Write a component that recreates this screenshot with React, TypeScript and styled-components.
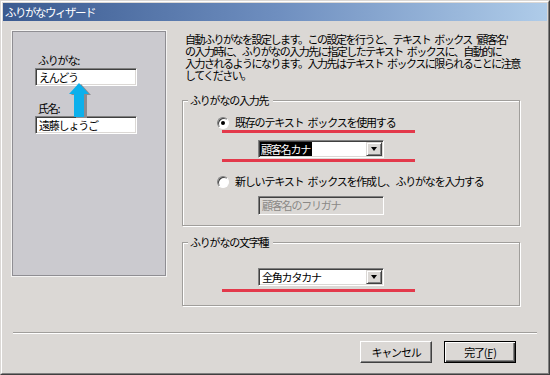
import React from "react";
import styled, { createGlobalStyle } from "styled-components";

const FACE = "#dbd8d5";
const SHADOW = "#808080";
const DARK = "#404040";
const SP = "\u2002";

const Global = createGlobalStyle`
  html, body { margin: 0; padding: 0; background: ${FACE}; }
  body {
    font-family: "Noto Sans CJK JP", "Noto Sans", sans-serif;
    font-size: 11px;
    letter-spacing: -1.2px;
    color: #000;
  }
`;

const Window = styled.div`
  width: 550px;
  height: 375px;
  box-sizing: border-box;
  display: flex;
  border: 1px solid;
  border-color: ${FACE} ${DARK} ${DARK} ${FACE};
  background: ${FACE};
`;

const Frame = styled.div`
  flex: 1;
  display: flex;
  flex-direction: column;
  border: 1px solid;
  border-color: #fff ${SHADOW} ${SHADOW} #fff;
  padding: 1px;
`;

const TitleBar = styled.div`
  height: 18px;
  line-height: 18px;
  padding-left: 2px;
  color: #fff;
  font-size: 11.5px;
  letter-spacing: -1.5px;
  background: linear-gradient(90deg, #3a5a90 0%, #6e8ebf 50%, #afcce9 100%);
  white-space: nowrap;
`;

const Body = styled.div`
  flex: 1;
  display: flex;
  flex-direction: column;
`;

const Main = styled.div`
  display: flex;
  align-items: flex-start;
  gap: 15px;
  margin: 9px 0 0 8px;
`;

const LeftPanel = styled.div`
  position: relative;
  width: 156px;
  height: 247px;
  box-sizing: border-box;
  background: #cbcacf;
  border: 1px solid #f4f3f2;
  box-shadow: inset 0 0 0 1px #8f8e93;
  padding: 23px 0 0 23px;
  display: flex;
  flex-direction: column;
  align-items: flex-start;
`;

const FieldLabel = styled.div<{ $mt: number }>`
  margin: ${(p) => p.$mt}px 0 0 3px;
  line-height: 13px;
  height: 13px;
  white-space: nowrap;
`;

const SunkenBox = styled.div<{ $w: number; $h: number; $disabled?: boolean }>`
  width: ${(p) => p.$w}px;
  height: ${(p) => p.$h}px;
  box-sizing: border-box;
  border: 1px solid;
  border-color: ${SHADOW} #fff #fff ${SHADOW};
  box-shadow: inset 1px 1px 0 ${DARK}, inset -1px -1px 0 ${FACE};
  background: ${(p) => (p.$disabled ? FACE : "#fff")};
  color: ${(p) => (p.$disabled ? "#8a8886" : "#000")};
  padding: 1px;
  display: flex;
  align-items: stretch;
  white-space: nowrap;
  line-height: 14px;
`;

const BoxText = styled.span`
  padding-left: 2px;
`;

const ArrowOverlay = styled.svg`
  position: absolute;
  left: 56px;
  top: 52px;
`;

const RightCol = styled.div`
  width: 339px;
  display: flex;
  flex-direction: column;
`;

const Description = styled.p`
  margin: 3px 0 0 3px;
  line-height: 12px;
  letter-spacing: -1.5px;
  white-space: nowrap;
`;

const Group = styled.fieldset<{ $mt: number }>`
  margin: ${(p) => p.$mt}px 0 0 0;
  padding: 0;
  width: 338px;
  box-sizing: border-box;
  border: 1px solid #a09e9b;
  box-shadow: 1px 1px 0 #fff, inset 1px 1px 0 #fff;
  min-inline-size: 0;
`;

const Legend = styled.legend`
  margin-left: 5px;
  padding: 0 5px 0 2px;
  line-height: 12px;
  background: ${FACE};
  white-space: nowrap;
`;

const GroupInner = styled.div<{ $pt: number; $pb: number }>`
  display: flex;
  flex-direction: column;
  align-items: flex-start;
  padding: ${(p) => p.$pt}px 0 ${(p) => p.$pb}px 34px;
`;

const RadioRow = styled.div<{ $mt: number }>`
  display: flex;
  align-items: center;
  gap: 6px;
  height: 13px;
  line-height: 13px;
  margin-top: ${(p) => p.$mt}px;
  white-space: nowrap;
`;

const RadioDot = styled.span<{ $checked?: boolean }>`
  position: relative;
  flex: none;
  width: 12px;
  height: 12px;
  box-sizing: border-box;
  border-radius: 50%;
  background: #fff;
  border: 1px solid;
  border-color: ${SHADOW} #fff #fff ${SHADOW};
  box-shadow: inset 1px 1px 0 ${DARK};
  &::after {
    content: "";
    display: ${(p) => (p.$checked ? "block" : "none")};
    position: absolute;
    left: 3px;
    top: 3px;
    width: 4px;
    height: 4px;
    border-radius: 50%;
    background: #000;
  }
`;

const Indented = styled.div<{ $ml: number; $mt: number }>`
  margin-left: ${(p) => p.$ml}px;
  margin-top: ${(p) => p.$mt}px;
`;

const Mark = styled.div<{ $mt: number }>`
  width: 193px;
  height: 3px;
  margin: ${(p) => p.$mt}px 0 0 5px;
  background: #e3394b;
  box-shadow: 0 0 0.5px #f07080;
`;

const ComboText = styled.div`
  flex: 1;
  display: flex;
  align-items: stretch;
  min-width: 0;
`;

const Selected = styled.span`
  background: #000;
  color: #fff;
  padding: 0 2px 0 1px;
`;

const DropButton = styled.div`
  width: 16px;
  box-sizing: border-box;
  background: ${FACE};
  border: 1px solid;
  border-color: ${FACE} ${DARK} ${DARK} ${FACE};
  box-shadow: inset 1px 1px 0 #fff, inset -1px -1px 0 ${SHADOW};
  display: flex;
  align-items: center;
  justify-content: center;
  &::after {
    content: "";
    width: 0;
    height: 0;
    border-left: 3.5px solid transparent;
    border-right: 3.5px solid transparent;
    border-top: 4px solid #000;
  }
`;

const Separator = styled.div`
  margin: 26px 10px 0 10px;
  border-top: 1px solid #a09e9b;
  border-bottom: 1px solid #fff;
`;

const ButtonRow = styled.div`
  display: flex;
  justify-content: flex-end;
  gap: 12px;
  margin-top: 7px;
  padding-right: 31px;
`;

const Button = styled.button<{ $default?: boolean }>`
  width: 72px;
  height: 22px;
  box-sizing: border-box;
  margin: 0;
  padding: 0;
  font: inherit;
  letter-spacing: inherit;
  color: #000;
  background: ${FACE};
  border: 1px solid;
  border-color: ${(p) => (p.$default ? "#000" : `#fff ${DARK} ${DARK} #fff`)};
  box-shadow: ${(p) =>
    p.$default
      ? `inset 1px 1px 0 #fff, inset -1px -1px 0 ${DARK}, inset -2px -2px 0 ${SHADOW}`
      : `inset -1px -1px 0 ${SHADOW}`};
  line-height: 18px;
`;

const Accel = styled.span`
  text-decoration: underline;
  text-underline-offset: 1px;
  margin: 0 1px;
`;

function UpArrow() {
  return (
    <ArrowOverlay width="24" height="35" viewBox="0 0 24 35">
      <polygon points="13,1 23,12 19,12 19,35 8,35 8,12 3,12" fill="#8c8b90" />
      <polygon points="11,0 21,11 16,11 16,34 6,34 6,11 1,11" fill="#0cb0ec" />
    </ArrowOverlay>
  );
}

export default function App() {
  return (
    <>
      <Global />
      <Window>
        <Frame>
          <TitleBar>ふりがなウィザード</TitleBar>
          <Body>
            <Main>
              <LeftPanel>
                <FieldLabel $mt={0}>ふりがな:</FieldLabel>
                <SunkenBox $w={102} $h={18} style={{ marginTop: 1 }}>
                  <BoxText>えんどう</BoxText>
                </SunkenBox>
                <FieldLabel $mt={16}>氏名:</FieldLabel>
                <SunkenBox $w={102} $h={18} style={{ marginTop: 1 }}>
                  <BoxText>遠藤しょうご</BoxText>
                </SunkenBox>
                <UpArrow />
              </LeftPanel>
              <RightCol>
                <Description>
                  {`自動ふりがなを設定します。この設定を行うと、テキスト${SP}ボックス${SP}'顧客名'`}
                  <br />
                  {`の入力時に、ふりがなの入力先に指定したテキスト${SP}ボックスに、自動的に`}
                  <br />
                  {`入力されるようになります。入力先はテキスト${SP}ボックスに限られることに注意`}
                  <br />
                  してください。
                </Description>
                <Group $mt={13}>
                  <Legend>ふりがなの入力先</Legend>
                  <GroupInner $pt={10} $pb={10}>
                    <RadioRow $mt={0}>
                      <RadioDot $checked />
                      {`既存のテキスト${SP}ボックスを使用する`}
                    </RadioRow>
                    <Mark $mt={1} />
                    <Indented $ml={41} $mt={7}>
                      <SunkenBox $w={126} $h={18}>
                        <ComboText>
                          <Selected>顧客名カナ</Selected>
                        </ComboText>
                        <DropButton />
                      </SunkenBox>
                    </Indented>
                    <Mark $mt={1} />
                    <RadioRow $mt={13}>
                      <RadioDot />
                      {`新しいテキスト${SP}ボックスを作成し、ふりがなを入力する`}
                    </RadioRow>
                    <Indented $ml={41} $mt={8}>
                      <SunkenBox $w={126} $h={19} $disabled>
                        <BoxText>顧客名のフリガナ</BoxText>
                      </SunkenBox>
                    </Indented>
                  </GroupInner>
                </Group>
                <Group $mt={10}>
                  <Legend>ふりがなの文字種</Legend>
                  <GroupInner $pt={20} $pb={13}>
                    <Indented $ml={41} $mt={0}>
                      <SunkenBox $w={126} $h={18}>
                        <ComboText>
                          <BoxText>全角カタカナ</BoxText>
                        </ComboText>
                        <DropButton />
                      </SunkenBox>
                    </Indented>
                    <Mark $mt={3} />
                  </GroupInner>
                </Group>
              </RightCol>
            </Main>
            <Separator />
            <ButtonRow>
              <Button>キャンセル</Button>
              <Button $default>
                完了(<Accel>F</Accel>)
              </Button>
            </ButtonRow>
          </Body>
        </Frame>
      </Window>
    </>
  );
}
